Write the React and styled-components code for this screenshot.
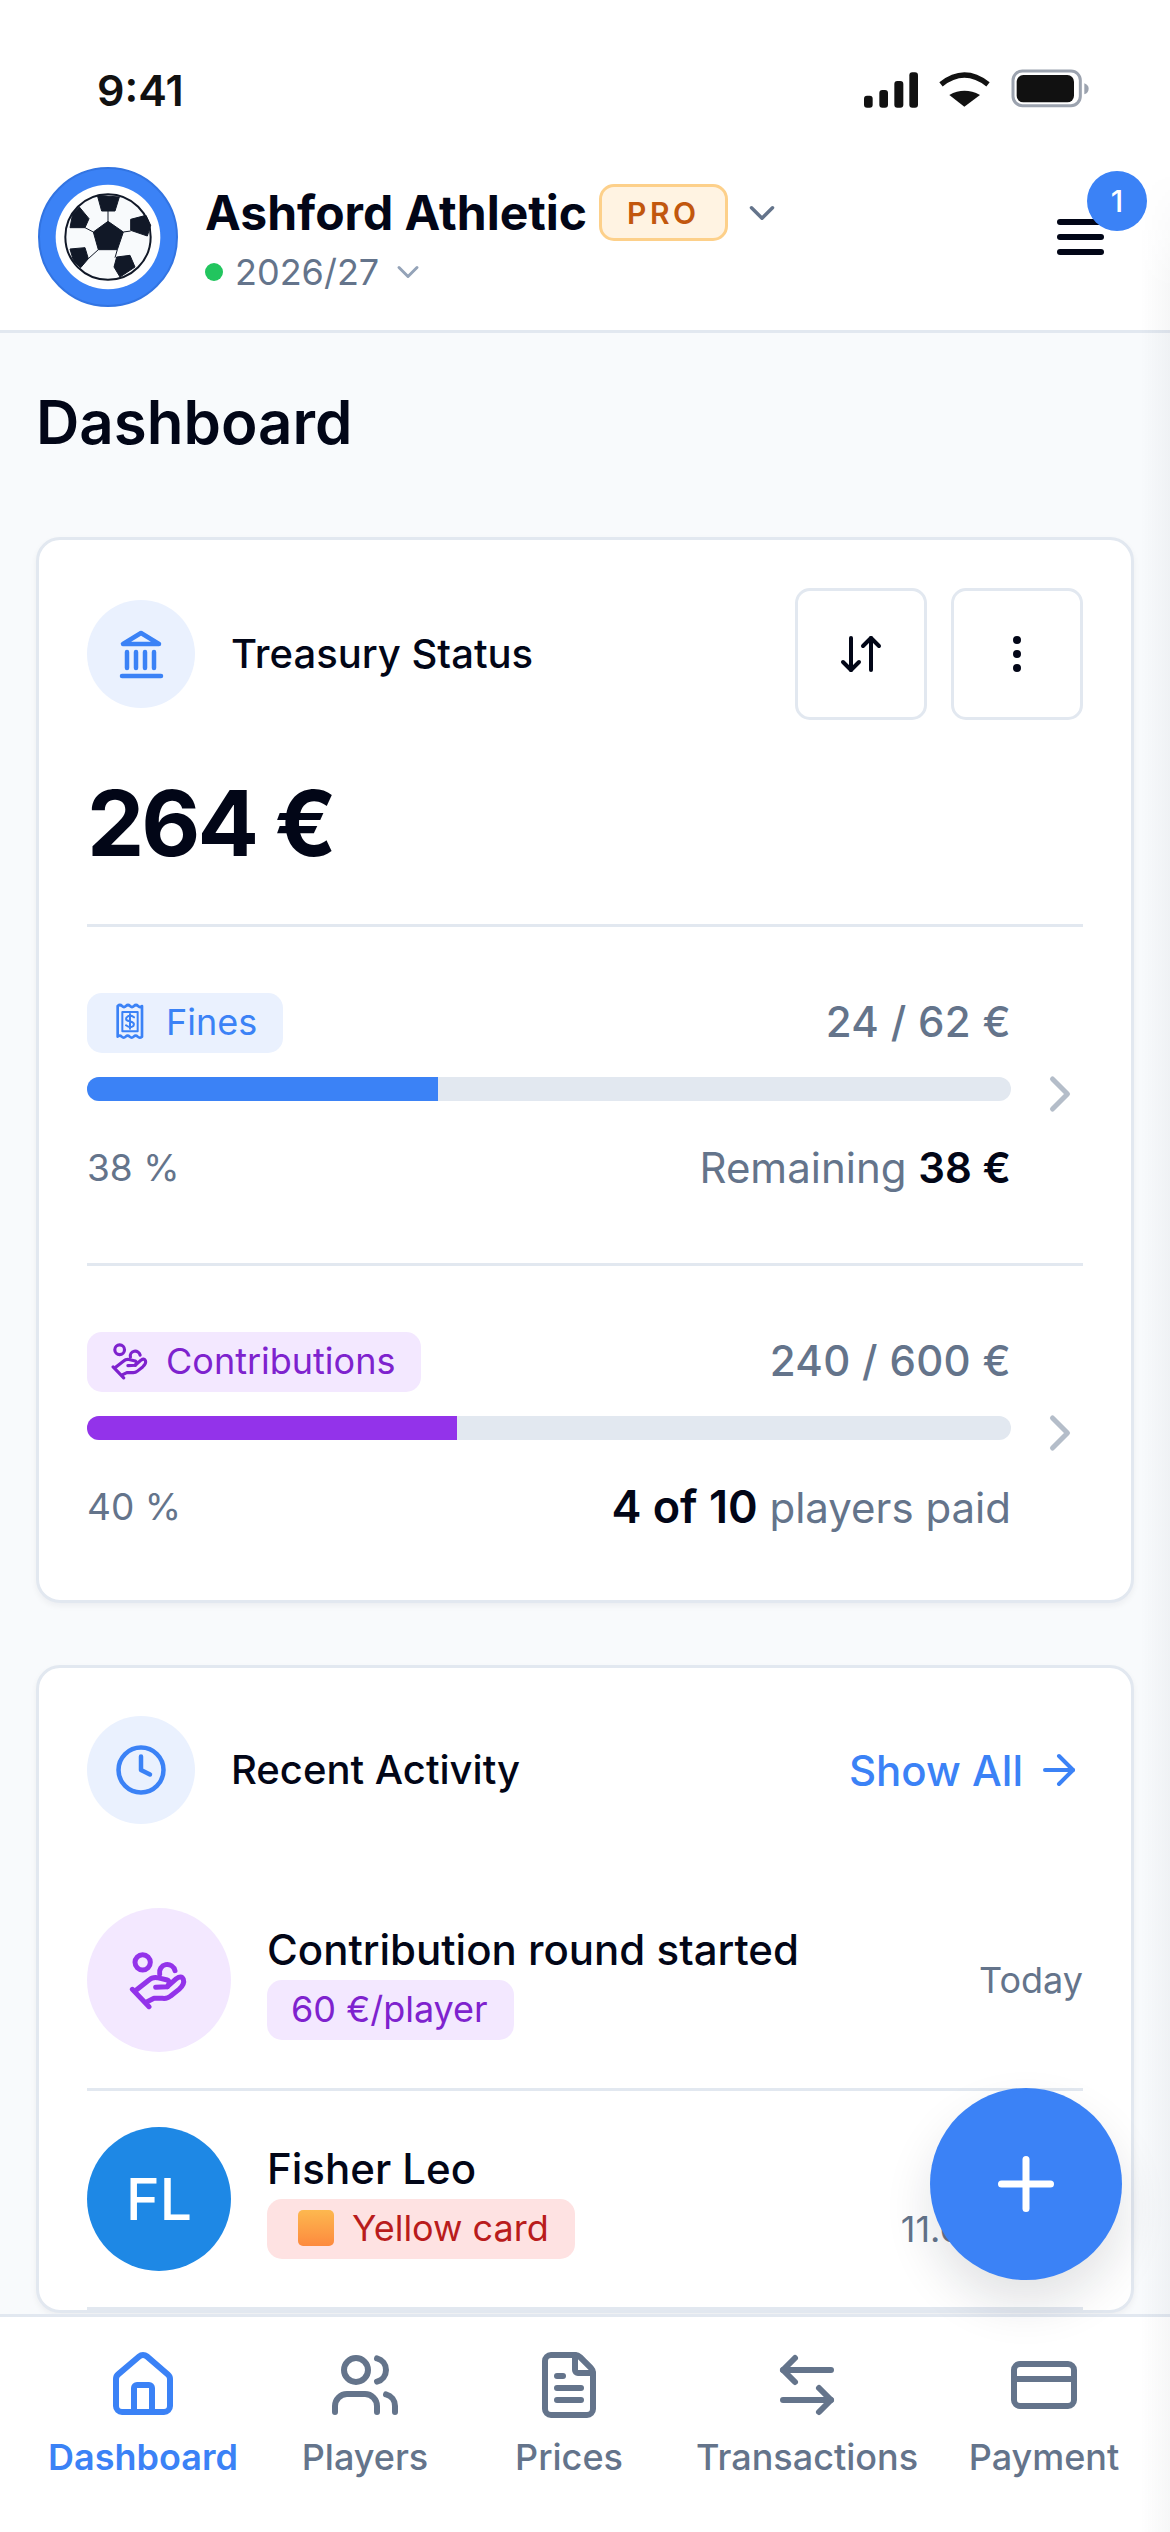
// App.jsx
import React from "react";
import styled, { createGlobalStyle } from "styled-components";
import {
  House,
  Users,
  FileText,
  ArrowLeftRight,
  CreditCard,
  ChevronRight,
  ChevronDown,
  ArrowRight,
  ArrowDownUp,
  EllipsisVertical,
  Clock,
  Plus,
} from "lucide-react";

const GlobalStyle = createGlobalStyle`
  html, body {
    margin: 0;
    padding: 0;
    background: #ffffff;
  }
  * {
    box-sizing: border-box;
  }
`;

const Screen = styled.div`
  position: relative;
  display: flex;
  flex-direction: column;
  width: 1170px;
  height: 2532px;
  overflow: hidden;
  background: #f8fafc;
  font-family: Inter, "Liberation Sans", sans-serif;
  color: #020617;
`;

const EdgeShade = styled.div`
  position: absolute;
  top: 170px;
  right: 0;
  bottom: 0;
  width: 30px;
  background: linear-gradient(to right, rgba(15, 23, 42, 0), rgba(15, 23, 42, 0.035));
  mask-image: linear-gradient(to bottom, transparent, #000 120px);
  pointer-events: none;
  z-index: 3;
`;

const StatusBar = styled.div`
  flex: none;
  display: flex;
  justify-content: space-between;
  align-items: flex-start;
  height: 150px;
  padding: 55px 70px 0 97px;
  background: #ffffff;
`;

const Time = styled.div`
  font-size: 43px;
  font-weight: 600;
  line-height: 70px;
  color: #111111;
`;

const Header = styled.header`
  flex: none;
  display: flex;
  align-items: center;
  padding: 17px 66px 23px 38px;
  background: #ffffff;
  border-bottom: 3px solid #e2e8f0;
`;

const ClubInfo = styled.div`
  flex: 1;
  display: flex;
  flex-direction: column;
  margin-left: 27px;
  padding-top: 4px;
`;

const NameRow = styled.div`
  display: flex;
  align-items: center;
  height: 57px;
`;

const ClubName = styled.div`
  font-size: 48px;
  font-weight: 700;
  line-height: 57px;
`;

const ProBadge = styled.div`
  margin-left: 12px;
  display: flex;
  align-items: center;
  height: 57px;
  padding: 0 25px;
  border: 3px solid #fdd08a;
  border-radius: 15px;
  background: #fff3e2;
  color: #c2570e;
  font-size: 30px;
  font-weight: 600;
  letter-spacing: 3.5px;
`;

const SeasonRow = styled.div`
  display: flex;
  align-items: center;
  height: 45px;
  margin-top: 8px;
  color: #64748b;
  font-size: 36px;
`;

const Dot = styled.span`
  width: 18px;
  height: 18px;
  border-radius: 50%;
  background: #22c55e;
  margin-right: 12px;
`;

const MenuButton = styled.div`
  position: relative;
  display: flex;
  flex-direction: column;
  gap: 9px;
  width: 47px;
`;

const MenuBar = styled.span`
  display: block;
  height: 6px;
  border-radius: 3px;
  background: #020617;
`;

const MenuBadge = styled.span`
  position: absolute;
  top: -48px;
  left: 30px;
  width: 60px;
  height: 60px;
  border-radius: 50%;
  background: #3b82f6;
  color: #ffffff;
  font-size: 30px;
  font-weight: 500;
  display: flex;
  align-items: center;
  justify-content: center;
`;

const Main = styled.main`
  flex: 1;
  min-height: 0;
  overflow: hidden;
  padding: 53px 36px 0;
`;

const PageTitle = styled.h1`
  margin: 0 0 79px;
  font-size: 60px;
  font-weight: 600;
  line-height: 72px;
`;

const Card = styled.section`
  margin-bottom: 62px;
  padding: 48px 48px 0;
  background: #ffffff;
  border: 3px solid #e2e8f0;
  border-radius: 24px;
  box-shadow: 0 3px 6px rgba(15, 23, 42, 0.05);
`;

const CardHead = styled.div`
  display: flex;
  align-items: center;
`;

const HeadIcon = styled.div`
  width: 108px;
  height: 108px;
  border-radius: 50%;
  background: #eaf1fe;
  color: #3b82f6;
  display: flex;
  align-items: center;
  justify-content: center;
  margin-right: 36px;
`;

const CardTitle = styled.h2`
  flex: 1;
  margin: 0;
  font-size: 40px;
  font-weight: 500;
  line-height: 54px;
`;

const ActionButton = styled.button`
  width: 132px;
  height: 132px;
  margin-left: 24px;
  padding: 0;
  background: #ffffff;
  border: 3px solid #e2e8f0;
  border-radius: 15px;
  color: #020617;
  display: flex;
  align-items: center;
  justify-content: center;
`;

const Balance = styled.div`
  margin: 49px 0 47px;
  font-size: 91px;
  font-weight: 700;
  line-height: 108px;
  letter-spacing: -3px;
`;

const BudgetSection = styled.div`
  display: flex;
  align-items: center;
  border-top: 3px solid #e2e8f0;
  padding: 66px 0 ${({ $last }) => ($last ? "19px" : "69px")};
`;

const BudgetBody = styled.div`
  flex: 0 0 924px;
`;

const BudgetTop = styled.div`
  display: flex;
  justify-content: space-between;
  align-items: center;
  height: 60px;
`;

const Chip = styled.span`
  display: inline-flex;
  align-items: center;
  height: 60px;
  padding: 0 26px 3px ${({ $padLeft }) => $padLeft || 24}px;
  gap: ${({ $gap }) => $gap || 0}px;
  border-radius: 15px;
  background: ${({ $bg }) => $bg};
  color: ${({ $fg }) => $fg};
  font-size: 36px;
  font-weight: 400;
  white-space: nowrap;
`;

const BudgetAmount = styled.span`
  padding-bottom: 3px;
  color: #64748b;
  font-size: 42px;
  font-weight: 500;
  letter-spacing: 0.3px;
`;

const Track = styled.div`
  height: 24px;
  margin-top: 24px;
  border-radius: 12px;
  background: #e2e8f0;
  overflow: hidden;
`;

const Fill = styled.div`
  height: 100%;
  background: ${({ $color }) => $color};
`;

const BudgetStats = styled.div`
  display: flex;
  justify-content: space-between;
  align-items: center;
  height: 54px;
  margin-top: 39px;
`;

const Percent = styled.span`
  color: #64748b;
  font-size: 37px;
`;

const StatText = styled.span`
  color: #64748b;
  font-size: 42px;
`;

const Strong = styled.strong`
  color: #020617;
  font-size: ${({ $size }) => $size || 42}px;
  font-weight: 600;
`;

const SectionChevron = styled(ChevronRight)`
  flex: none;
  margin-left: 19px;
  color: #b4bdc9;
`;

const CardFoot = styled.div`
  height: 48px;
`;

const ShowAll = styled.span`
  display: flex;
  align-items: center;
  gap: 12px;
  color: #3b82f6;
  font-size: 42px;
  font-weight: 500;
`;

const ActivityList = styled.div`
  margin-top: 48px;
`;

const ActivityRow = styled.div`
  display: flex;
  align-items: center;
  padding: 36px 0;
  border-bottom: 3px solid #e2e8f0;
`;

const RowAvatar = styled.div`
  flex: none;
  width: 144px;
  height: 144px;
  border-radius: 50%;
  background: ${({ $bg }) => $bg};
  color: ${({ $fg }) => $fg || "#ffffff"};
  font-size: 57px;
  font-weight: 500;
  display: flex;
  align-items: center;
  justify-content: center;
`;

const RowBody = styled.div`
  flex: 1;
  margin-left: 36px;
`;

const RowTitle = styled.div`
  font-size: 42px;
  font-weight: 500;
  line-height: 60px;
`;

const RowDate = styled.div`
  color: #64748b;
  font-size: 36px;
  margin-top: ${({ $offset }) => $offset || 0}px;
`;

const CardSwatch = styled.span`
  width: 36px;
  height: 36px;
  border-radius: 5px;
  background: linear-gradient(to bottom, #fdb84f, #fd8a3e);
`;

const Fab = styled.button`
  position: absolute;
  right: 48px;
  bottom: 252px;
  width: 192px;
  height: 192px;
  padding: 0;
  border: none;
  border-radius: 50%;
  background: #3b82f6;
  color: #ffffff;
  display: flex;
  align-items: center;
  justify-content: center;
  box-shadow: 0 24px 48px rgba(15, 23, 42, 0.12);
  z-index: 2;
`;

const BottomNav = styled.nav`
  flex: none;
  display: grid;
  grid-template-columns: 228px 216px 192px 284px 190px;
  height: 218px;
  padding: 32px 0 0 29px;
  background: #ffffff;
  border-top: 3px solid #e2e8f0;
`;

const NavItem = styled.div`
  display: flex;
  flex-direction: column;
  align-items: center;
  color: ${({ $active }) => ($active ? "#3b82f6" : "#64748b")};
  font-weight: ${({ $active }) => ($active ? 600 : 500)};
`;

const NavLabel = styled.span`
  margin-top: 12px;
  font-size: 36px;
  line-height: 48px;
  white-space: nowrap;
`;

const StatusIcons = () => (
  <svg width="250" height="70" viewBox="0 0 750 210">
    <g fill="#111111">
      <rect x="42" y="122" width="26" height="36" rx="9" />
      <rect x="88" y="105" width="26" height="53" rx="9" />
      <rect x="133" y="78" width="27" height="80" rx="9" />
      <rect x="178" y="52" width="26" height="106" rx="9" />
      <path d="M298 120 Q343 95 390 120 L343 155 Z" />
    </g>
    <path d="M273 88 Q343 32 414 88" fill="none" stroke="#111111" strokeWidth="16" />
    <rect x="489" y="48" width="202" height="104" rx="28" fill="none" stroke="#9ca3af" strokeWidth="9" />
    <rect x="500" y="60" width="172" height="82" rx="20" fill="#111111" />
    <path d="M703 85 Q716 90 716 101 Q716 113 703 118 Z" fill="#9ca3af" />
  </svg>
);

const ClubLogo = () => (
  <svg width="140" height="140" viewBox="54 50 420 420" style={{ flex: "none" }}>
    <circle cx="264" cy="260" r="207" fill="#3b82f6" stroke="#3274e2" strokeWidth="6" />
    <circle cx="264" cy="260" r="157" fill="#ffffff" />
    <circle cx="264" cy="260" r="128" fill="#f8fafc" stroke="#111827" strokeWidth="6" />
    <g fill="#111827" stroke="#111827" strokeWidth="3" strokeLinejoin="round">
      <polygon points="232,135 298,140 285,182 245,182" />
      <polygon points="332,207 378,195 392,225 382,257 332,240" />
      <polygon points="264,213 310,245 292,298 235,298 220,245" />
      <polygon points="178,170 207,205 195,232 150,232 158,190" />
      <polygon points="150,296 195,292 205,325 182,352 160,330" />
      <polygon points="290,320 330,315 345,350 300,380 282,350" />
      <path
        d="M264 182V213M195 232L220 245M310 245L332 242M235 298L205 325M292 298L285 322"
        fill="none"
      />
    </g>
  </svg>
);

const BankIcon = () => (
  <svg width="54" height="54" viewBox="0 0 54 54" fill="none" stroke="currentColor" strokeWidth="4.5" strokeLinecap="round" strokeLinejoin="round">
    <path d="M27 6L9 17H45Z" />
    <path d="M13 25V41M22 25V41M31 25V41M40 25V41" />
    <path d="M8 49H47" />
  </svg>
);

const ReceiptIcon = () => (
  <svg width="33" height="39" viewBox="100 100 99 117" fill="none" stroke="currentColor" strokeWidth="8" strokeLinecap="round" strokeLinejoin="round">
    <path d="M111 112V204Q117 198 123 204T135 204T147 204T159 204T171 204T184 204V112Q178 118 172 112T160 112T148 112T136 112T124 112T111 112Z" />
    <rect x="125" y="130" width="46" height="58" strokeWidth="6" />
    <path d="M160 146Q148 136 138 146Q132 156 148 158Q164 162 158 172Q148 180 136 170M148 136V180" strokeWidth="6" />
  </svg>
);

const HandCoinIcon = ({ size }) => (
  <svg width={size} height={size} viewBox="90 60 180 180" fill="none" stroke="currentColor" strokeWidth="15" strokeLinecap="round" strokeLinejoin="round">
    <circle cx="131" cy="97" r="23" />
    <path d="M182 132A23 23 0 0 1 228 122" />
    <path d="M100 178L150 230" />
    <path d="M112 180L150 150Q160 141 175 143L205 150Q216 155 205 170L170 172" />
    <path d="M205 170L232 146Q247 135 253 148Q258 162 240 178L215 198Q205 207 190 205H165L143 216" />
  </svg>
);

const ActivityRows = () => (
  <ActivityList>
    <ActivityRow>
      <RowAvatar $bg="#f3e8ff" $fg="#9333ea">
        <HandCoinIcon size={60} />
      </RowAvatar>
      <RowBody>
        <RowTitle>Contribution round started</RowTitle>
        <Chip $bg="#f3e8ff" $fg="#7e22ce">60 €/player</Chip>
      </RowBody>
      <RowDate>Today</RowDate>
    </ActivityRow>
    <ActivityRow>
      <RowAvatar $bg="#1e88e5">FL</RowAvatar>
      <RowBody>
        <RowTitle>Fisher Leo</RowTitle>
        <Chip $bg="#fee2e2" $fg="#b91c1c" $padLeft={31} $gap={18}>
          <CardSwatch />
          Yellow card
        </Chip>
      </RowBody>
      <RowDate $offset={60}>11.03.2026</RowDate>
    </ActivityRow>
  </ActivityList>
);

export default function App() {
  return (
    <Screen>
      <GlobalStyle />
      <StatusBar>
        <Time>9:41</Time>
        <StatusIcons />
      </StatusBar>

      <Header>
        <ClubLogo />
        <ClubInfo>
          <NameRow>
            <ClubName>Ashford Athletic</ClubName>
            <ProBadge>PRO</ProBadge>
            <ChevronDown size={42} color="#64748b" style={{ marginLeft: 13 }} />
          </NameRow>
          <SeasonRow>
            <Dot />
            2026/27
            <ChevronDown size={36} color="#94a3b8" style={{ marginLeft: 11 }} />
          </SeasonRow>
        </ClubInfo>
        <MenuButton>
          <MenuBar />
          <MenuBar />
          <MenuBar />
          <MenuBadge>1</MenuBadge>
        </MenuButton>
      </Header>

      <Main>
        <PageTitle>Dashboard</PageTitle>

        <Card>
          <CardHead>
            <HeadIcon>
              <BankIcon />
            </HeadIcon>
            <CardTitle>Treasury Status</CardTitle>
            <ActionButton>
              <ArrowDownUp size={48} />
            </ActionButton>
            <ActionButton>
              <EllipsisVertical size={48} />
            </ActionButton>
          </CardHead>

          <Balance>264 €</Balance>

          <BudgetSection>
            <BudgetBody>
              <BudgetTop>
                <Chip $bg="#eaf1fe" $fg="#3b82f6" $padLeft={27} $gap={19}>
                  <ReceiptIcon />
                  Fines
                </Chip>
                <BudgetAmount>24 / 62 €</BudgetAmount>
              </BudgetTop>
              <Track>
                <Fill $color="#3b82f6" style={{ width: "38%" }} />
              </Track>
              <BudgetStats>
                <Percent>38 %</Percent>
                <StatText>
                  Remaining <Strong>38 €</Strong>
                </StatText>
              </BudgetStats>
            </BudgetBody>
            <SectionChevron size={60} />
          </BudgetSection>

          <BudgetSection $last>
            <BudgetBody>
              <BudgetTop>
                <Chip $bg="#f3e8ff" $fg="#7e22ce" $gap={17}>
                  <HandCoinIcon size={38} />
                  Contributions
                </Chip>
                <BudgetAmount>240 / 600 €</BudgetAmount>
              </BudgetTop>
              <Track>
                <Fill $color="#9333ea" style={{ width: "40%" }} />
              </Track>
              <BudgetStats>
                <Percent>40 %</Percent>
                <StatText>
                  <Strong $size={45}>4 of 10</Strong> players paid
                </StatText>
              </BudgetStats>
            </BudgetBody>
            <SectionChevron size={60} />
          </BudgetSection>

          <CardFoot />
        </Card>

        <Card>
          <CardHead>
            <HeadIcon>
              <Clock size={54} />
            </HeadIcon>
            <CardTitle>Recent Activity</CardTitle>
            <ShowAll>
              Show All
              <ArrowRight size={48} />
            </ShowAll>
          </CardHead>
          <ActivityRows />
        </Card>
      </Main>

      <Fab>
        <Plus size={84} />
      </Fab>

      <BottomNav>
        <NavItem $active>
          <House size={72} />
          <NavLabel>Dashboard</NavLabel>
        </NavItem>
        <NavItem>
          <Users size={72} />
          <NavLabel>Players</NavLabel>
        </NavItem>
        <NavItem>
          <FileText size={72} />
          <NavLabel>Prices</NavLabel>
        </NavItem>
        <NavItem>
          <ArrowLeftRight size={72} />
          <NavLabel>Transactions</NavLabel>
        </NavItem>
        <NavItem>
          <CreditCard size={72} />
          <NavLabel>Payment</NavLabel>
        </NavItem>
      </BottomNav>

      <EdgeShade />
    </Screen>
  );
}
